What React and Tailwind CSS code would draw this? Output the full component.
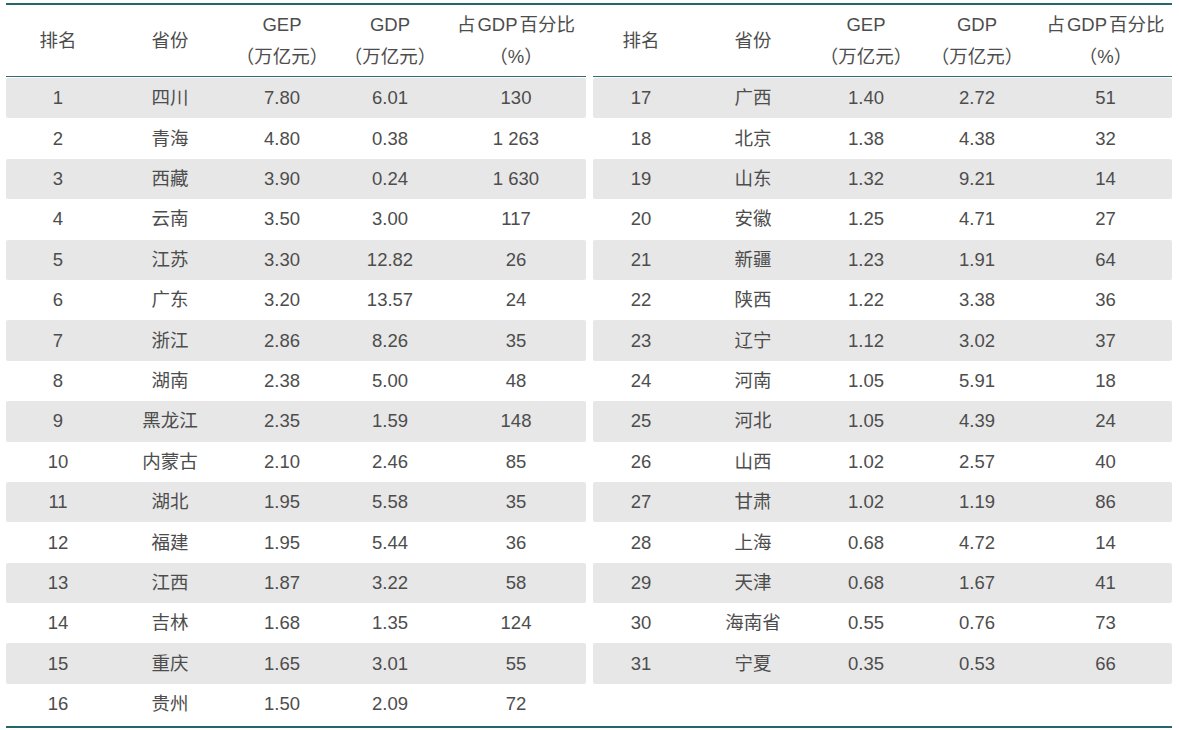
import React from 'react';

const left = [
  ['1', '四川', '7.80', '6.01', '130'],
  ['2', '青海', '4.80', '0.38', '1 263'],
  ['3', '西藏', '3.90', '0.24', '1 630'],
  ['4', '云南', '3.50', '3.00', '117'],
  ['5', '江苏', '3.30', '12.82', '26'],
  ['6', '广东', '3.20', '13.57', '24'],
  ['7', '浙江', '2.86', '8.26', '35'],
  ['8', '湖南', '2.38', '5.00', '48'],
  ['9', '黑龙江', '2.35', '1.59', '148'],
  ['10', '内蒙古', '2.10', '2.46', '85'],
  ['11', '湖北', '1.95', '5.58', '35'],
  ['12', '福建', '1.95', '5.44', '36'],
  ['13', '江西', '1.87', '3.22', '58'],
  ['14', '吉林', '1.68', '1.35', '124'],
  ['15', '重庆', '1.65', '3.01', '55'],
  ['16', '贵州', '1.50', '2.09', '72'],
];

const right = [
  ['17', '广西', '1.40', '2.72', '51'],
  ['18', '北京', '1.38', '4.38', '32'],
  ['19', '山东', '1.32', '9.21', '14'],
  ['20', '安徽', '1.25', '4.71', '27'],
  ['21', '新疆', '1.23', '1.91', '64'],
  ['22', '陕西', '1.22', '3.38', '36'],
  ['23', '辽宁', '1.12', '3.02', '37'],
  ['24', '河南', '1.05', '5.91', '18'],
  ['25', '河北', '1.05', '4.39', '24'],
  ['26', '山西', '1.02', '2.57', '40'],
  ['27', '甘肃', '1.02', '1.19', '86'],
  ['28', '上海', '0.68', '4.72', '14'],
  ['29', '天津', '0.68', '1.67', '41'],
  ['30', '海南省', '0.55', '0.76', '73'],
  ['31', '宁夏', '0.35', '0.53', '66'],
];

const leftCols = 'grid grid-cols-[104px_120px_104px_112px_140px]';
const rightCols = 'grid grid-cols-[96px_128px_98px_124px_133px]';

const RankTable = ({ rows, cols, width }) => (
  <div className={width}>
    <div className={`${cols} h-[72px] items-center text-center leading-[32px] border-b border-[#2f6e72]`}>
      <div>排名</div>
      <div>省份</div>
      <div>
        <div>GEP</div>
        <div>（万亿元）</div>
      </div>
      <div>
        <div>GDP</div>
        <div>（万亿元）</div>
      </div>
      <div>
        <div>
          占<span className="mx-[2px]">GDP</span>百分比
        </div>
        <div>（%）</div>
      </div>
    </div>
    <div className="pt-[1px]">
      {rows.map((r, i) => (
        <div
          key={r[0]}
          className={`${cols} h-[40.4px] items-center text-center rounded-[2px] ${i % 2 === 0 ? 'bg-[#e7e7e7]' : ''}`}
        >
          {r.map((c, j) => (
            <div key={j}>{c}</div>
          ))}
        </div>
      ))}
    </div>
  </div>
);

export default function App() {
  return (
    <div
      className="w-[1179px] h-[730px] bg-white pt-[3px] text-[18.5px] text-[#4d4d4d]"
      style={{ fontFamily: '"Liberation Sans", "Noto Sans CJK SC", sans-serif' }}
    >
      <div className="mx-[6px] w-[1166px] h-[725px] border-t-2 border-b-2 border-[#23666b] flex gap-[7px]">
        <RankTable rows={left} cols={leftCols} width="w-[580px]" />
        <RankTable rows={right} cols={rightCols} width="w-[579px]" />
      </div>
    </div>
  );
}
